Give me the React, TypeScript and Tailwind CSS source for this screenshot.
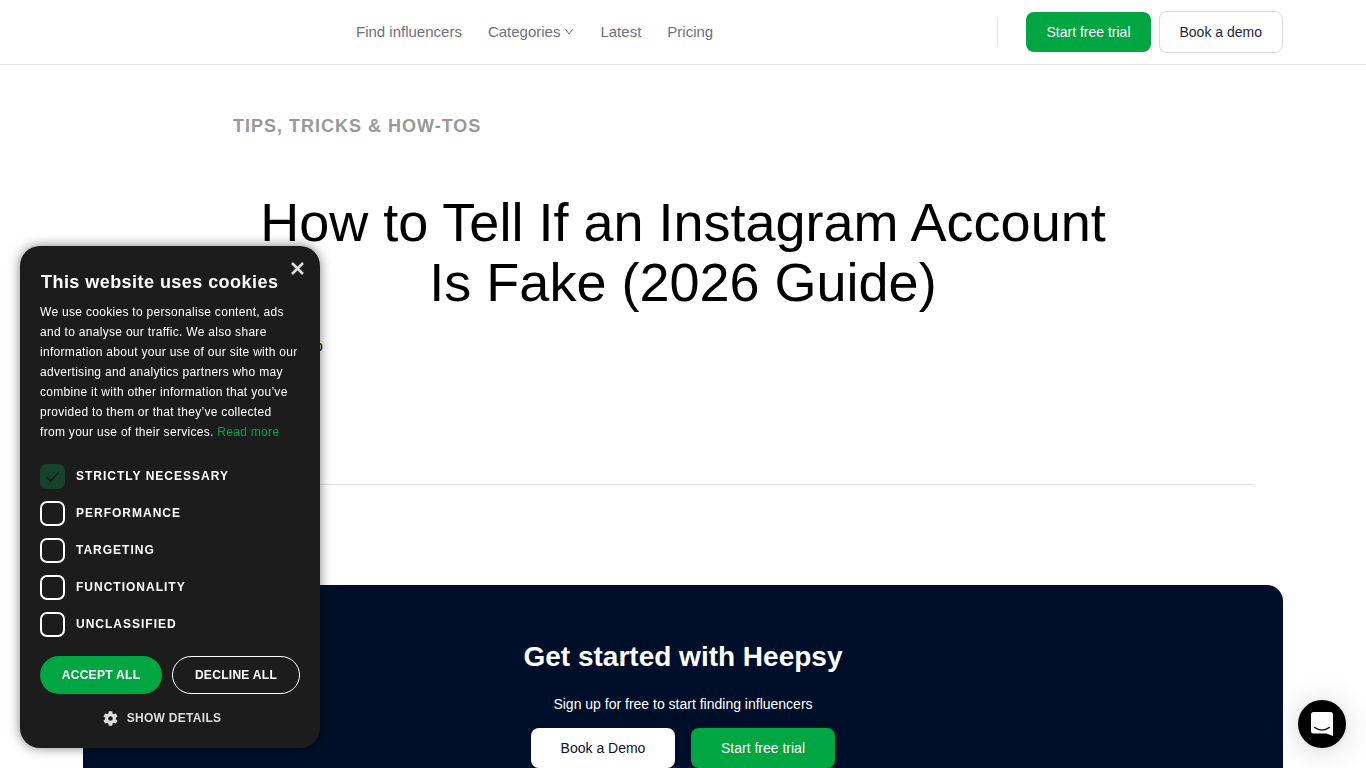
import React from "react";

const navLink = "text-[15px] leading-6 text-[#6b7280]";

const cookieOptions = [
  { id: "strict", label: "Strictly necessary", locked: true },
  { id: "performance", label: "Performance", locked: false },
  { id: "targeting", label: "Targeting", locked: false },
  { id: "functionality", label: "Functionality", locked: false },
  { id: "unclassified", label: "Unclassified", locked: false },
];

function Header() {
  return (
    <header className="border-b border-[#e3e3e6] bg-white">
      <div className="mx-auto flex h-16 max-w-[1200px] items-center">
        <nav className="flex flex-1 items-center gap-[26px] pl-[273px]">
          <a href="#find" className={navLink}>Find influencers</a>
          <button type="button" className="flex items-center gap-1 text-[15px] leading-6 text-[#6b7280]">
            Categories
            <svg width="10" height="8" viewBox="0 0 10 8" fill="none" stroke="#6b7280" strokeWidth="1" aria-hidden="true">
              <path d="M1.5 1.2 L5 6.2 L8.5 1.2" />
            </svg>
          </button>
          <a href="#latest" className={navLink}>Latest</a>
          <a href="#pricing" className={navLink}>Pricing</a>
        </nav>
        <div className="flex items-center">
          <div className="mr-7 h-7 w-px bg-[#e5e7eb]" />
          <button type="button" className="mr-2 h-10 rounded-lg bg-[#00a642] px-5 text-sm text-white">Start free trial</button>
          <button type="button" className="h-[42px] rounded-lg border border-[#d9dadf] px-5 text-sm text-[#1f1f3d]">Book a demo</button>
        </div>
      </div>
    </header>
  );
}

function Article() {
  return (
    <main className="mx-auto max-w-[1140px] border-b border-[#e0e0e0] pb-32">
      <div className="mx-auto max-w-[900px] pt-[49px]">
        <p className="text-lg leading-6 font-bold tracking-[1px] text-[#999999] uppercase">Tips, Tricks &amp; How-Tos</p>
        <h1 className="pt-[54px] text-center text-[54px] leading-[60px] text-black">
          How to Tell If an Instagram Account Is Fake (2026 Guide)
        </h1>
        <p className="pt-6 pl-[82px] text-sm leading-5 text-black">o</p>
      </div>
    </main>
  );
}

function GetStarted() {
  return (
    <section className="mx-auto mt-[100px] flex max-w-[1200px] flex-col items-center rounded-2xl bg-[#000f29] pt-[52px] pb-16 text-white">
      <h2 className="text-[28px] leading-10 font-bold">Get started with Heepsy</h2>
      <p className="pt-[17px] text-sm leading-5">Sign up for free to start finding influencers</p>
      <div className="flex gap-4 pt-[14px]">
        <button type="button" className="h-10 w-36 rounded-lg bg-white text-sm text-[#0f0f2d]">Book a Demo</button>
        <button type="button" className="h-10 w-36 rounded-lg bg-[#00a642] text-sm text-white">Start free trial</button>
      </div>
    </section>
  );
}

function CookieBanner() {
  return (
    <div
      role="dialog"
      aria-labelledby="cookie-title"
      className="fixed bottom-5 left-5 w-[300px] rounded-[20px] bg-[#1c1c1c] px-5 pt-6 pb-5 text-white shadow-[0_0_12px_rgba(0,0,0,0.5)]"
    >
      <button type="button" aria-label="Close" className="absolute top-4 right-4">
        <svg width="13" height="13" viewBox="0 0 13 13" stroke="#e0e0e0" strokeWidth="2.6" aria-hidden="true">
          <path d="M1 1 L12 12 M12 1 L1 12" />
        </svg>
      </button>
      <h2 id="cookie-title" className="pl-px text-lg leading-6 font-bold tracking-wide">This website uses cookies</h2>
      <p className="pt-2 text-xs leading-5 tracking-wide text-white">
        We use cookies to personalise content, ads and to analyse our traffic. We also share information about your use of our site with our advertising and analytics partners who may combine it with other information that you’ve provided to them or that they’ve collected from your use of their services.{" "}
        <a href="#cookies" className="text-[#00a642]">Read more</a>
      </p>
      <ul className="flex flex-col gap-3 pt-[22px]">
        {cookieOptions.map((option) => (
          <li key={option.id} className="flex h-[25px] items-center gap-[11px]">
            <span className="relative flex h-[25px] w-[25px]">
              <input
                id={option.id}
                type="checkbox"
                defaultChecked={option.locked}
                disabled={option.locked}
                className="h-[25px] w-[25px] appearance-none rounded-[7px] border-2 border-white bg-transparent disabled:border-[#17422a] disabled:bg-[#17422a]"
              />
              {option.locked && (
                <svg className="absolute inset-0" width="25" height="25" viewBox="0 0 25 25" fill="none" stroke="#1c1c1c" strokeWidth="1.8" aria-hidden="true">
                  <path d="M6.5 13 L10.5 17 L18.5 8.5" />
                </svg>
              )}
            </span>
            <label htmlFor={option.id} className="pb-px text-xs leading-5 font-bold tracking-[1px] uppercase">{option.label}</label>
          </li>
        ))}
      </ul>
      <div className="flex gap-[10px] pt-[19px]">
        <button type="button" className="h-[38px] w-[122px] rounded-full bg-[#00a642] text-xs font-bold tracking-wide uppercase">Accept all</button>
        <button type="button" className="h-[38px] flex-1 rounded-full border border-white text-xs font-bold tracking-wide uppercase">Decline all</button>
      </div>
      <button type="button" className="mx-auto mt-[14px] flex items-center gap-[9px] pr-4 text-xs leading-5 font-bold tracking-wide text-[#dddddd] uppercase">
        <svg width="15" height="15" viewBox="2 2 20 20" fill="#dddddd" aria-hidden="true">
          <path d="M19.14 12.94c.04-.3.06-.61.06-.94 0-.32-.02-.64-.07-.94l2.03-1.58c.18-.14.23-.41.12-.61l-1.92-3.32c-.12-.22-.37-.29-.59-.22l-2.39.96c-.5-.38-1.03-.7-1.62-.94l-.36-2.54c-.04-.24-.24-.41-.48-.41h-3.84c-.24 0-.43.17-.47.41l-.36 2.54c-.59.24-1.13.57-1.62.94l-2.39-.96c-.22-.08-.47 0-.59.22L2.74 8.87c-.12.21-.08.47.12.61l2.03 1.58c-.05.3-.09.63-.09.94s.02.64.07.94l-2.03 1.58c-.18.14-.23.41-.12.61l1.92 3.32c.12.22.37.29.59.22l2.39-.96c.5.38 1.03.7 1.62.94l.36 2.54c.05.24.24.41.48.41h3.84c.24 0 .44-.17.47-.41l.36-2.54c.59-.24 1.13-.56 1.62-.94l2.39.96c.22.08.47 0 .59-.22l1.92-3.32c.12-.22.07-.47-.12-.61l-2.01-1.58zM12 15c-1.66 0-3-1.34-3-3s1.34-3 3-3 3 1.34 3 3-1.34 3-3 3z" />
        </svg>
        Show details
      </button>
    </div>
  );
}

function ChatLauncher() {
  return (
    <button
      type="button"
      aria-label="Open chat"
      className="fixed right-5 bottom-5 flex h-12 w-12 items-center justify-center rounded-full bg-black shadow-[0_1px_6px_rgba(0,0,0,0.06),0_2px_32px_rgba(0,0,0,0.16)]"
    >
      <svg width="22" height="24" viewBox="0 0 22 24" aria-hidden="true">
        <path fill="white" d="M2.5 0H19.5Q22 0 22 2.5V24Q18.5 22.7 15.5 21.5H2.5Q0 21.500 0 19V2.500Q0 0 2.500 0Z" />
        <path d="M3.700 15.500Q11 20.700 18.300 15.500" fill="none" stroke="black" strokeWidth="1.300" strokeLinecap="round" />
      </svg>
    </button>
  );
}

export default function App() {
  return (
    <div className="min-h-screen bg-white font-['Liberation_Sans',Arial,sans-serif]">
      <Header />
      <Article />
      <GetStarted />
      <CookieBanner />
      <ChatLauncher />
    </div>
  );
}
